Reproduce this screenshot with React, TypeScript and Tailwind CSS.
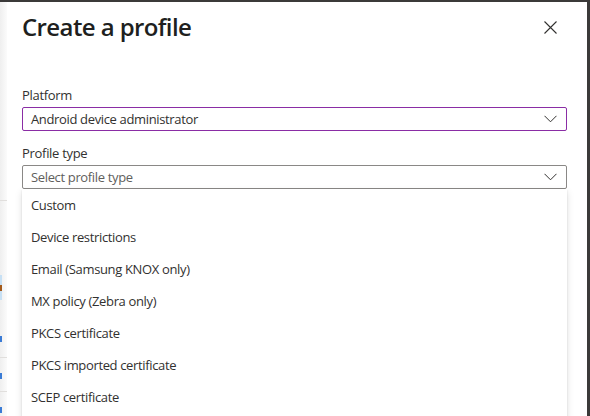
import React from "react";

const Chevron = () => (
  <svg width="13" height="8" viewBox="0 0 13 8" fill="none">
    <path d="M0.5 0.8 L6.5 6.8 L12.5 0.8" stroke="#323130" strokeWidth="1" />
  </svg>
);

const CloseIcon = () => (
  <svg width="13" height="13" viewBox="0 0 13 13" fill="none">
    <path d="M0.5 0.5 L12.5 12.5 M12.5 0.5 L0.5 12.5" stroke="#323130" strokeWidth="1.1" />
  </svg>
);

const items = [
  "Custom",
  "Device restrictions",
  "Email (Samsung KNOX only)",
  "MX policy (Zebra only)",
  "PKCS certificate",
  "PKCS imported certificate",
  "SCEP certificate",
];

export default function App() {
  return (
    <div
      className="w-[590px] h-[416px] overflow-hidden flex flex-col bg-white"
      style={{ fontFamily: '"Segoe UI", "Open Sans", "Noto Sans", sans-serif' }}
    >
      <div className="h-[2px] bg-[#3b3a39] shrink-0" />
      <div className="flex flex-1 min-h-0">
        {/* background page peeking through on the left */}
        <div className="w-[7px] shrink-0 bg-gradient-to-r from-[#efefef] to-[#fbfbfb] flex flex-col">
          <div className="h-[198px] shrink-0" />
          <div className="h-px w-full bg-[#e1dfdd] shrink-0" />
          <div className="h-[74px] shrink-0" />
          <div className="h-[25px] w-[2px] bg-[#c7e0f4] flex items-center shrink-0">
            <div className="h-[6px] w-[2px] bg-[#a35a1c]" />
          </div>
          <div className="h-[36px] shrink-0" />
          <div className="h-[6px] w-[2px] bg-[#3a7bd5] shrink-0" />
          <div className="h-[15px] shrink-0" />
          <div className="h-px w-full bg-[#e1dfdd] shrink-0" />
          <div className="h-[15px] shrink-0" />
          <div className="h-[6px] w-[2px] bg-[#3a7bd5] shrink-0" />
          <div className="h-[12px] shrink-0" />
          <div className="h-px w-full bg-[#e1dfdd] shrink-0" />
          <div className="h-[15px] shrink-0" />
          <div className="h-[6px] w-[2px] bg-[#3a7bd5] shrink-0" />
        </div>

        {/* panel */}
        <div className="flex-1 min-w-0 bg-white pl-[15px] pr-[20px] flex flex-col overflow-hidden">
          <div className="flex items-center justify-between h-[48px] pt-[1px] shrink-0">
            <h1 className="text-[24px] font-semibold text-[#201f1e] leading-none tracking-[-0.6px]">
              Create a profile
            </h1>
            <div className="mr-[10px] mt-[2px]">
              <CloseIcon />
            </div>
          </div>

          <div className="h-[36px] shrink-0" />
          <div className="text-[13px] tracking-[-0.3px] text-[#323130] leading-[18px] mb-[3px] shrink-0">Platform</div>
          <div className="h-[24px] shrink-0 border border-[#8a2da5] rounded-[2px] flex items-center justify-between pl-[8px] pr-[9px]">
            <span className="text-[13px] tracking-[-0.35px] text-[#323130] leading-none">Android device administrator</span>
            <Chevron />
          </div>

          <div className="h-[13px] shrink-0" />
          <div className="text-[13px] tracking-[-0.3px] text-[#323130] leading-[18px] mb-[3px] shrink-0">Profile type</div>
          <div className="h-[24px] shrink-0 border border-[#8a8886] rounded-[2px] flex items-center justify-between pl-[8px] pr-[9px] bg-white">
            <span className="text-[13px] tracking-[-0.35px] text-[#605e5c] leading-none">Select profile type</span>
            <Chevron />
          </div>

          <div className="bg-white shrink-0 h-[260px] shadow-[0_3.2px_7.2px_rgba(0,0,0,0.13),0_0.6px_1.8px_rgba(0,0,0,0.11)] flex flex-col">
            {items.map((it) => (
              <div key={it} className="h-[32px] flex items-center pl-[9px] pt-[1px] text-[13px] tracking-[-0.35px] text-[#323130] shrink-0">
                {it}
              </div>
            ))}
          </div>
        </div>

        <div className="w-[3px] shrink-0 bg-[#3b3a39]" />
      </div>
    </div>
  );
}
